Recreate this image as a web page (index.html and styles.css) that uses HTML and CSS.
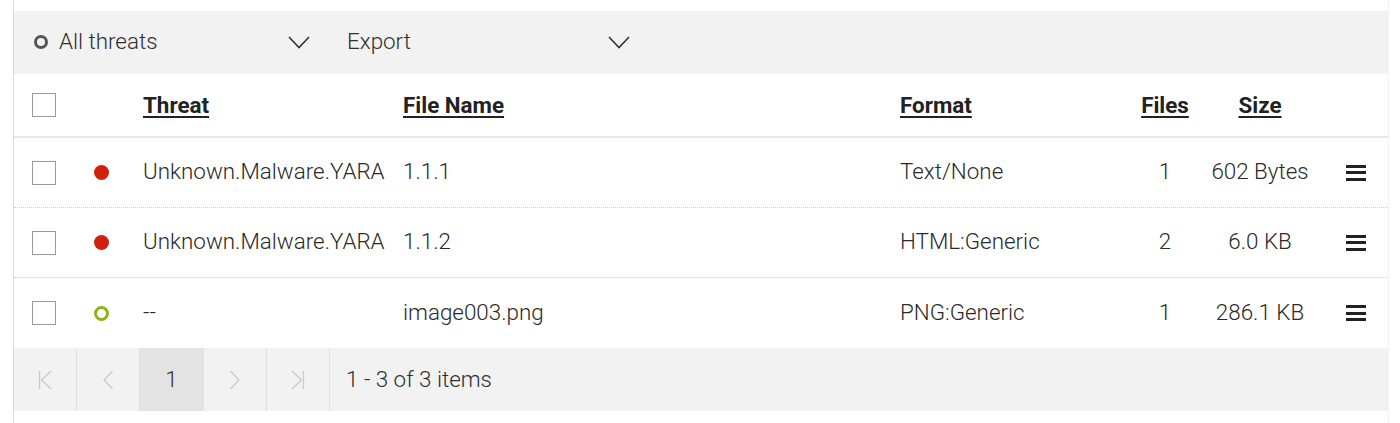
FILE: index.html
```html
<!DOCTYPE html>
<html>
<head>
<meta charset="utf-8">
<link rel="stylesheet" href="styles.css">
</head>
<body>
<div class="frame">
  <div class="toolbar">
    <div class="dropdown dd-threats">
      <span class="dd-label"><span class="ring-icon"></span>All threats</span>
      <svg class="chev" width="22" height="13" viewBox="0 0 22 13"><path d="M1 1 L11 11.5 L21 1" fill="none" stroke="#333" stroke-width="1.6"/></svg>
    </div>
    <div class="dropdown dd-export">
      <span class="dd-label">Export</span>
      <svg class="chev" width="22" height="13" viewBox="0 0 22 13"><path d="M1 1 L11 11.5 L21 1" fill="none" stroke="#333" stroke-width="1.6"/></svg>
    </div>
  </div>

  <div class="row head">
    <div class="c-check"><span class="checkbox"></span></div>
    <div class="c-dot"></div>
    <div class="c-threat"><a>Threat</a></div>
    <div class="c-file"><a>File Name</a></div>
    <div class="c-format"><a>Format</a></div>
    <div class="c-files"><a>Files</a></div>
    <div class="c-size"><a>Size</a></div>
    <div class="c-menu"></div>
  </div>

  <div class="row item">
    <div class="c-check"><span class="checkbox"></span></div>
    <div class="c-dot"><span class="dot red"></span></div>
    <div class="c-threat">Unknown.Malware.YARA</div>
    <div class="c-file">1.1.1</div>
    <div class="c-format">Text/None</div>
    <div class="c-files">1</div>
    <div class="c-size">602 Bytes</div>
    <div class="c-menu"><span class="burger"><i></i><i></i><i></i></span></div>
  </div>

  <div class="row item">
    <div class="c-check"><span class="checkbox"></span></div>
    <div class="c-dot"><span class="dot red"></span></div>
    <div class="c-threat">Unknown.Malware.YARA</div>
    <div class="c-file">1.1.2</div>
    <div class="c-format">HTML:Generic</div>
    <div class="c-files">2</div>
    <div class="c-size">6.0 KB</div>
    <div class="c-menu"><span class="burger"><i></i><i></i><i></i></span></div>
  </div>

  <div class="row item last">
    <div class="c-check"><span class="checkbox"></span></div>
    <div class="c-dot"><span class="dot green"></span></div>
    <div class="c-threat">--</div>
    <div class="c-file">image003.png</div>
    <div class="c-format">PNG:Generic</div>
    <div class="c-files">1</div>
    <div class="c-size">286.1 KB</div>
    <div class="c-menu"><span class="burger"><i></i><i></i><i></i></span></div>
  </div>

  <div class="pager">
    <span class="pbtn">
      <svg width="14" height="20" viewBox="0 0 14 20"><path d="M1.5 1 V19 M13 1 L3.5 10 L13 19" fill="none" stroke="#c9c9c9" stroke-width="1.3"/></svg>
    </span>
    <span class="pbtn">
      <svg width="10" height="20" viewBox="0 0 10 20"><path d="M9.5 1 L1 10 L9.5 19" fill="none" stroke="#c9c9c9" stroke-width="1.3"/></svg>
    </span>
    <span class="pbtn current">1</span>
    <span class="pbtn">
      <svg width="10" height="20" viewBox="0 0 10 20"><path d="M0.5 1 L9 10 L0.5 19" fill="none" stroke="#c9c9c9" stroke-width="1.3"/></svg>
    </span>
    <span class="pbtn">
      <svg width="14" height="20" viewBox="0 0 14 20"><path d="M12.5 1 V19 M1 1 L10.5 10 L1 19" fill="none" stroke="#c9c9c9" stroke-width="1.3"/></svg>
    </span>
    <span class="pinfo">1 - 3 of 3 items</span>
  </div>
</div>
</body>
</html>
```

FILE: styles.css
```css
html, body {
  margin: 0;
  padding: 0;
  background: #ffffff;
}

body {
  font-family: Roboto, "Liberation Sans", sans-serif;
  font-size: 22.4px;
  font-weight: 300;
  color: #2a2a2a;
}

.frame {
  margin-left: 13px;
  width: 1376px;
  min-height: 423px;
  box-sizing: border-box;
  border-left: 1px solid #dcdcdc;
  border-right: 1px solid #f3f3f3;
  padding-top: 11px;
}

/* toolbar */
.toolbar {
  height: 63px;
  background: #f2f2f2;
  display: flex;
  align-items: center;
}

.dropdown {
  display: flex;
  align-items: center;
  justify-content: space-between;
  box-sizing: border-box;
  height: 100%;
  padding-right: 20px;
}

.dd-threats {
  width: 316px;
  padding-left: 20px;
}

.dd-export {
  width: 320px;
  padding-left: 17px;
}

.dd-label {
  display: flex;
  align-items: center;
  color: #2f2f2f;
  padding-bottom: 3px;
}

.ring-icon {
  display: inline-block;
  width: 14px;
  height: 14px;
  box-sizing: border-box;
  border: 3px solid #555;
  border-radius: 50%;
  margin-right: 11px;
  margin-top: 2px;
}

.chev {
  display: block;
}

/* table rows */
.row {
  display: grid;
  grid-template-columns: 66px 63px 260px 497px 220px 90px 100px 1fr;
  align-items: center;
}

.row.head {
  height: 62px;
  border-bottom: 2px solid #e8e8e8;
}

.row.head a {
  font-weight: 700;
  color: #222;
  text-decoration: underline;
  text-underline-offset: 3px;
  text-decoration-thickness: 1.5px;
}

.row.item {
  height: 69px;
  border-bottom: 1px dotted #cfcfcf;
}

.row.item.last {
  height: 70px;
  border-bottom: none;
}

.row.item .c-threat,
.row.item .c-file,
.row.item .c-format,
.row.item .c-files,
.row.item .c-size {
  padding-bottom: 3px;
}

.c-check {
  padding-left: 18px;
  display: flex;
  align-items: center;
}

.checkbox {
  display: block;
  width: 24px;
  height: 24px;
  box-sizing: border-box;
  border: 1px solid #9a9a9a;
  background: #fff;
}

.c-dot {
  display: flex;
  align-items: center;
  padding-left: 14px;
}

.dot {
  display: block;
  width: 15px;
  height: 15px;
  box-sizing: border-box;
  border-radius: 50%;
}

.dot.red {
  background: #d2200f;
}

.dot.green {
  border: 3px solid #8cb21c;
}

.c-threat, .c-file, .c-format {
  white-space: nowrap;
}

.c-files, .c-size {
  text-align: center;
  white-space: nowrap;
}

.c-menu {
  padding-left: 36px;
  display: flex;
  align-items: center;
}

.burger {
  display: flex;
  flex-direction: column;
  gap: 3.5px;
  width: 20px;
}

.burger i {
  display: block;
  height: 3px;
  background: #222;
}

/* pager */
.pager {
  height: 63px;
  background: #f2f2f2;
  display: flex;
  align-items: stretch;
}

.pbtn {
  width: 62px;
  border-right: 1px solid #e0e0e0;
  display: flex;
  align-items: center;
  justify-content: center;
  color: #333;
}

.pbtn.current {
  width: 64px;
  background: #e3e3e3;
  padding-bottom: 2px;
  box-sizing: border-box;
}

.pinfo {
  display: flex;
  align-items: center;
  padding-left: 16px;
  padding-bottom: 2px;
  color: #2f2f2f;
}
```
